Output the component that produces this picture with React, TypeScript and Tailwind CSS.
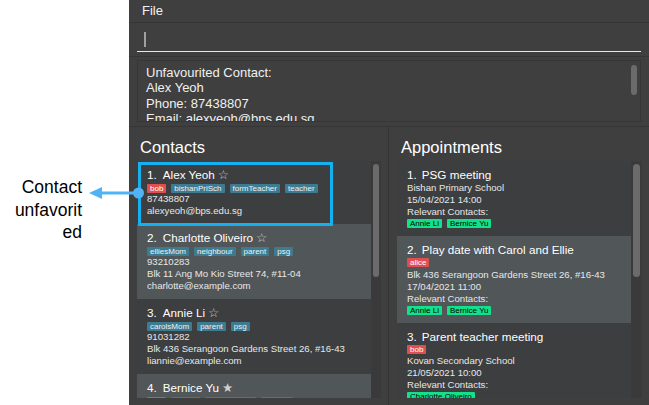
import React from "react";

type TagT = { t: string; c: "red" | "blue" | "green" };

function Chip({ t, c }: TagT) {
  const cls =
    c === "red"
      ? "bg-[#e04f4f] text-white"
      : c === "green"
      ? "bg-[#14e08c] text-black"
      : "bg-[#3e7b91] text-[#f0f0f0]";
  return (
    <span className={`${cls} h-[9px] px-[3px] text-[8px] leading-[9px] rounded-[1px] whitespace-nowrap`}>
      {t}
    </span>
  );
}

type Contact = { name: string; fav: boolean; tags: TagT[]; lines: string[] };

const contacts: Contact[] = [
  {
    name: "Alex Yeoh",
    fav: false,
    tags: [
      { t: "bob", c: "red" },
      { t: "bishanPriSch", c: "blue" },
      { t: "formTeacher", c: "blue" },
      { t: "teacher", c: "blue" },
    ],
    lines: ["87438807", "alexyeoh@bps.edu.sg"],
  },
  {
    name: "Charlotte Oliveiro",
    fav: false,
    tags: [
      { t: "elliesMom", c: "blue" },
      { t: "neighbour", c: "blue" },
      { t: "parent", c: "blue" },
      { t: "psg", c: "blue" },
    ],
    lines: ["93210283", "Blk 11 Ang Mo Kio Street 74, #11-04", "charlotte@example.com"],
  },
  {
    name: "Annie Li",
    fav: false,
    tags: [
      { t: "carolsMom", c: "blue" },
      { t: "parent", c: "blue" },
      { t: "psg", c: "blue" },
    ],
    lines: ["91031282", "Blk 436 Serangoon Gardens Street 26, #16-43", "liannie@example.com"],
  },
  {
    name: "Bernice Yu",
    fav: true,
    tags: [
      { t: "bob", c: "red" },
      { t: "parent", c: "blue" },
      { t: "formTeacher", c: "blue" },
      { t: "teacher", c: "blue" },
    ],
    lines: ["99272758", "Blk 30 Lorong 3 Serangoon Gardens, #07-18", "berniceyu@example.com"],
  },
];

type Appt = { name: string; tag?: string; lines: string[]; people: string[] };

const appts: Appt[] = [
  {
    name: "PSG meeting",
    lines: ["Bishan Primary School", "15/04/2021 14:00", "Relevant Contacts:"],
    people: ["Annie Li", "Bernice Yu"],
  },
  {
    name: "Play date with Carol and Ellie",
    tag: "alice",
    lines: ["Blk 436 Serangoon Gardens Street 26, #16-43", "17/04/2021 11:00", "Relevant Contacts:"],
    people: ["Annie Li", "Bernice Yu"],
  },
  {
    name: "Parent teacher meeting",
    tag: "bob",
    lines: ["Kovan Secondary School", "21/05/2021 10:00", "Relevant Contacts:"],
    people: ["Charlotte Oliveiro"],
  },
];

function ContactCard({ c, i }: { c: Contact; i: number }) {
  return (
    <div className={`${i % 2 === 0 ? "bg-[#3c3e3f]" : "bg-[#515658]"} shrink-0 pl-[10px] pr-[6px] pt-[6px] pb-[7px]`}>
      <div className="h-[16px] flex items-center text-[11.7px] leading-[16px] text-white whitespace-nowrap">
        <span>{i + 1}.</span>
        <span className="ml-[6px]">{c.name}</span>
        <span className="ml-[3px] text-[#d0d0d0] font-['DejaVu_Sans',sans-serif] text-[12.5px]">{c.fav ? "★" : "☆"}</span>
      </div>
      <div className="mt-[1px] flex gap-[5px]">
        {c.tags.map((t, k) => (
          <Chip key={k} {...t} />
        ))}
      </div>
      {c.lines.map((l, k) => (
        <div key={k} className="text-[9.6px] leading-[12px] text-[#e8e8e8] whitespace-nowrap">
          {l}
        </div>
      ))}
    </div>
  );
}

function ApptCard({ a, i }: { a: Appt; i: number }) {
  return (
    <div className={`${i % 2 === 0 ? "bg-[#3c3e3f]" : "bg-[#515658]"} shrink-0 pl-[10px] pr-[6px] pt-[6px] pb-[8px]`}>
      <div className="h-[15px] flex items-center text-[11.7px] leading-[15px] text-white whitespace-nowrap">
        <span>{i + 1}.</span>
        <span className="ml-[5px]">{a.name}</span>
      </div>
      {a.tag && (
        <div className="mt-[1px] mb-[1.5px] flex gap-[5px]">
          <Chip t={a.tag} c="red" />
        </div>
      )}
      {a.lines.map((l, k) => (
        <div key={k} className="text-[9.6px] leading-[12px] text-[#e8e8e8] whitespace-nowrap">
          {l}
        </div>
      ))}
      <div className="mt-[1px] flex gap-[5px]">
        {a.people.map((p, k) => (
          <Chip key={k} t={p} c="green" />
        ))}
      </div>
    </div>
  );
}

export default function App() {
  return (
    <div className="relative w-[649px] h-[405px] flex bg-white overflow-hidden font-['Liberation_Sans',Arial,sans-serif]">
      {/* annotation text */}
      <div className="w-[129px] shrink-0 pt-[176px] pr-[47px] text-right text-[17.5px] leading-[22.5px] text-black">
        Contact
        <br />
        unfavorit
        <br />
        ed
      </div>

      {/* app window */}
      <div className="flex-1 flex flex-col bg-[#3f3f3f] text-white">
        {/* menu */}
        <div className="h-[23px] shrink-0 border-b border-[#353535] pl-[13px] text-[13px] leading-[22px] text-[#f2f2f2]">
          File
        </div>
        {/* command box */}
        <div className="h-[34px] shrink-0 border-b border-[#363636]">
          <div className="mx-[8px] h-[29px] border-b border-[#e8e8e8] pt-[9px] pl-[7px]">
            <div className="w-[1.5px] h-[15px] bg-[#a0a0a0]" />
          </div>
        </div>
        {/* result display */}
        <div className="h-[70px] shrink-0 border-b border-[#353535] pt-[3px]">
          <div className="relative mx-[8px] h-[62px] border border-[#363636] overflow-hidden pl-[8px] pt-[3.5px] text-[13px] leading-[15.5px] text-[#f0f0f0]">
            <div>Unfavourited Contact:</div>
            <div>Alex Yeoh</div>
            <div>Phone: 87438807</div>
            <div>Email: alexyeoh@bps.edu.sg</div>
            <div className="absolute right-[3px] top-[4px] w-[6px] h-[30px] rounded-full bg-[#6b6b6b]" />
          </div>
        </div>

        {/* panels */}
        <div className="flex-1 flex min-h-0">
          {/* contacts */}
          <div className="w-[260px] shrink-0 border-r border-[#343434] flex flex-col pl-[8px] pr-[7px] pb-[7px]">
            <div className="pt-[10px] pl-[3px] h-[34px] text-[16.5px] leading-[20px] text-white">Contacts</div>
            <div className="flex-1 min-h-0 flex bg-[#3a3a3a]">
              <div className="w-[234px] flex flex-col overflow-hidden">
                {contacts.map((c, i) => (
                  <ContactCard key={i} c={c} i={i} />
                ))}
              </div>
              <div className="flex-1 pl-[2px] pt-[3px]">
                <div className="w-[6px] h-[113px] rounded-full bg-[#6b6b6b]" />
              </div>
            </div>
          </div>

          {/* appointments */}
          <div className="flex-1 flex flex-col pl-[8px] pr-[7px] pb-[7px]">
            <div className="pt-[10px] pl-[4px] h-[34px] text-[16.5px] leading-[20px] text-white">Appointments</div>
            <div className="flex-1 min-h-0 flex bg-[#3a3a3a]">
              <div className="w-[234px] flex flex-col overflow-hidden">
                {appts.map((a, i) => (
                  <ApptCard key={i} a={a} i={i} />
                ))}
              </div>
              <div className="flex-1 pl-[2px] pt-[3px]">
                <div className="w-[7px] h-[113px] rounded-full bg-[#6b6b6b]" />
              </div>
            </div>
          </div>
        </div>
      </div>

      {/* annotation highlight box */}
      <div className="absolute left-[138px] top-[162px] w-[195px] h-[64px] border-[3px] border-[#13b1ef]" />
      {/* annotation arrow */}
      <svg className="absolute left-[85px] top-[185px]" width="62" height="16" viewBox="0 0 62 16">
        <line x1="14" y1="8" x2="53" y2="8" stroke="#4fb3f5" strokeWidth="3" />
        <polygon points="4,8 17,2 17,14" fill="#4fb3f5" />
        <circle cx="53.5" cy="8" r="5.5" fill="#4fb3f5" />
      </svg>
    </div>
  );
}
